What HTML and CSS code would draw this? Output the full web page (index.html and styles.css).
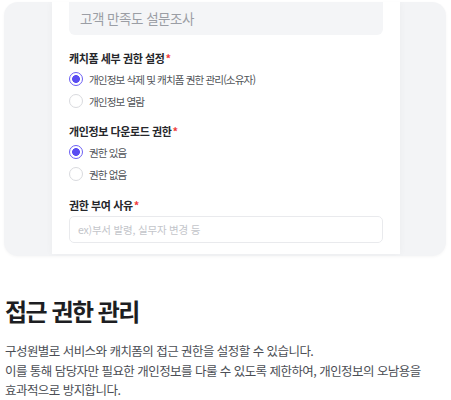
FILE: index.html
```html
<!DOCTYPE html>
<html lang="ko">
<head>
<meta charset="utf-8">
<link rel="stylesheet" href="styles.css">
</head>
<body>
<div class="showcase">
  <div class="card">
    <div class="title-input">고객 만족도 설문조사</div>
    <div class="label">캐치폼 세부 권한 설정<span class="req">*</span></div>
    <div class="radio-row"><span class="radio checked"></span><span class="radio-text">개인정보 삭제 및 캐치폼 권한 관리(소유자)</span></div>
    <div class="radio-row"><span class="radio"></span><span class="radio-text">개인정보 열람</span></div>
    <div class="label gap">개인정보 다운로드 권한<span class="req">*</span></div>
    <div class="radio-row"><span class="radio checked"></span><span class="radio-text">권한 있음</span></div>
    <div class="radio-row"><span class="radio"></span><span class="radio-text">권한 없음</span></div>
    <div class="label gap2">권한 부여 사유<span class="req">*</span></div>
    <div class="text-input">ex)부서 발령, 실무자 변경 등</div>
  </div>
</div>
<h1 class="heading">접근 권한 관리</h1>
<p class="desc">구성원별로 서비스와 캐치폼의 접근 권한을 설정할 수 있습니다.<br>이를 통해 담당자만 필요한 개인정보를 다룰 수 있도록 제한하여, 개인정보의 오남용을<br>효과적으로 방지합니다.</p>
</body>
</html>
```

FILE: styles.css
```css
* { box-sizing: border-box; }
html, body { margin: 0; background: #ffffff; }
body {
  padding: 2px 5px 0 4px;
  font-family: "Noto Sans CJK KR", "Noto Sans", sans-serif;
}
.showcase {
  height: 254px;
  background: #f3f4f6;
  border-radius: 14px;
  overflow: hidden;
  padding-left: 48px;
  box-shadow: 0 1px 3px rgba(0,0,0,0.04);
}
.card {
  width: 348px;
  height: 252px;
  background: #ffffff;
  padding: 0 17px;
  box-shadow: 0 0 8px rgba(30,40,60,0.04);
}
.title-input {
  height: 33px;
  background: #f4f5f7;
  border-radius: 0 0 6px 6px;
  padding-left: 11px;
  font-size: 13.5px;
  line-height: 33px;
  letter-spacing: -0.5px;
  color: #9b9ea5;
}
.label {
  margin-top: 16px;
  height: 14px;
  line-height: 14px;
  font-size: 11px;
  font-weight: 700;
  letter-spacing: -0.4px;
  color: #26272b;
}
.label.gap { margin-top: 12px; }
.label.gap2 { margin-top: 13px; }
.req { color: #f03c3c; margin-left: 1px; }
.radio-row {
  height: 22px;
  display: flex;
  align-items: center;
  gap: 6px;
}
.label + .radio-row { margin-top: 3px; }
.radio {
  width: 14px;
  height: 14px;
  border-radius: 50%;
  border: 1px solid #d9dade;
  background: #fff;
  flex: none;
}
.radio.checked {
  border: 1.5px solid #6c5ff3;
  background: radial-gradient(circle, #5a4df2 0 3.6px, #fff 4.2px);
}
.radio-text {
  font-size: 10.6px;
  letter-spacing: -0.9px;
  color: #515459;
}
.text-input {
  margin-top: 4px;
  height: 27px;
  border: 1px solid #e9eaed;
  border-radius: 5px;
  padding-left: 8px;
  font-size: 10.5px;
  line-height: 25px;
  letter-spacing: -0.2px;
  color: #c3c5ca;
}
.heading {
  margin: 40px 0 0 1px;
  font-size: 24px;
  line-height: 30px;
  font-weight: 700;
  letter-spacing: -1.5px;
  color: #1d1e22;
}
.desc {
  margin: 15px 0 0 1px;
  font-size: 12.5px;
  line-height: 19.5px;
  letter-spacing: -0.55px;
  color: #4b4e55;
}
```
